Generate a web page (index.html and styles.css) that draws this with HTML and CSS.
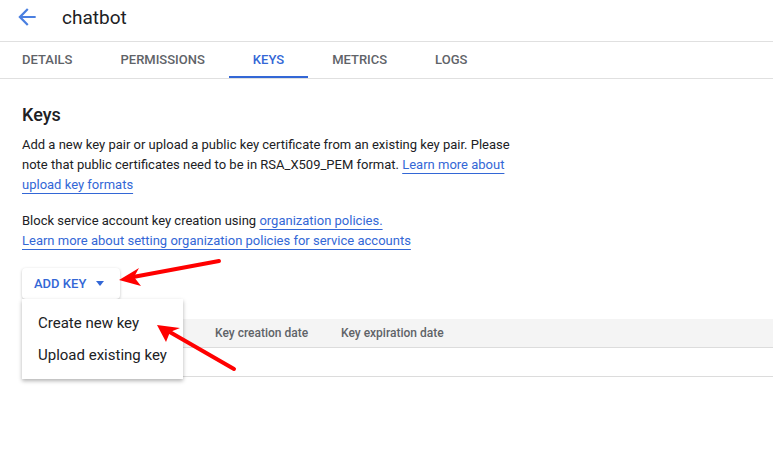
FILE: index.html
```html
<!DOCTYPE html>
<html>
<head>
<meta charset="utf-8">
<link rel="stylesheet" href="styles.css">
</head>
<body>
<div class="page">
  <header class="topbar">
    <span class="back">
      <svg width="26" height="26" viewBox="0 0 24 24"><path d="M20 11H7.83l5.59-5.59L12 4l-8 8 8 8 1.41-1.41L7.83 13H20v-2z" fill="#4a7fe0"/></svg>
    </span>
    <span class="title">chatbot</span>
  </header>
  <nav class="tabs">
    <span class="tab first">DETAILS</span>
    <span class="tab">PERMISSIONS</span>
    <span class="tab active">KEYS</span>
    <span class="tab">METRICS</span>
    <span class="tab">LOGS</span>
  </nav>
  <main class="content">
    <h1 class="heading">Keys</h1>
    <p class="text">Add a new key pair or upload a public key certificate from an existing key pair. Please note that public certificates need to be in RSA_X509_PEM format. <a class="link">Learn more about</a> <a class="link">upload key formats</a></p>
    <p class="text block">Block service account key creation using <a class="link">organization policies.</a><br><a class="link">Learn more about setting organization policies for service accounts</a></p>
    <div class="actions">
      <button class="addkey">ADD KEY <span class="caret"></span></button>
      <div class="menu">
        <div class="item">Create new key</div>
        <div class="item">Upload existing key</div>
      </div>
    </div>
    <div class="table">
      <div class="thead">
        <span class="col c1"></span>
        <span class="col c2">Key creation date</span>
        <span class="col c3">Key expiration date</span>
      </div>
      <div class="trow"></div>
    </div>
  </main>
  <svg class="arrows" width="773" height="466" viewBox="0 0 773 466">
    <g stroke="#f00" stroke-width="4" stroke-linecap="round" fill="none">
      <line x1="219" y1="261" x2="133" y2="277"/>
      <line x1="234" y1="369" x2="168" y2="331"/>
    </g>
    <g fill="#f00">
      <polygon points="119,280 139,268 134,277 141,286"/>
      <polygon points="157,325 180,328 170,332 166,342"/>
    </g>
  </svg>
</div>
</body>
</html>
```
FILE: styles.css
```css
* { box-sizing: border-box; }
html, body { margin: 0; padding: 0; background: #fff; }
body { font-family: Roboto, "Liberation Sans", Arial, sans-serif; color: #202124; }
.page { position: relative; width: 773px; height: 466px; overflow: hidden; }
.topbar { height: 42px; display: flex; align-items: center; border-bottom: 1px solid #e0e0e0; padding-left: 14px; padding-bottom: 7px; }
.back { display: flex; width: 26px; height: 26px; }
.title { margin-left: 22px; font-size: 19px; color: #202124; }
.tabs { height: 37px; display: flex; border-bottom: 1px solid #e0e0e0; }
.tab { display: flex; align-items: center; padding: 0 24px 1px; font-size: 13px; font-weight: 500; color: #5f6368; height: 36px; }
.tab.first { padding-left: 22px; }
.tab.active { color: #3367d6; border-bottom: 2px solid #3367d6; padding-top: 1px; padding-bottom: 0; }
.content { padding: 0 0 0 22px; }
.heading { margin: 24px 0 0; font-size: 18px; font-weight: 500; line-height: 24px; }
.text { margin: 8px 0 0; width: 500px; font-size: 13px; line-height: 20px; color: #202124; }
.text.block { margin-top: 16px; width: 520px; }
.link { color: #3367d6; text-decoration: underline; text-decoration-color: #3367d6; text-underline-offset: 4px; text-decoration-thickness: 1px; }
.actions { position: relative; margin-top: 17px; height: 31px; }
.addkey { height: 31px; width: 98px; border: none; background: #fff; border-radius: 4px; box-shadow: 0 1px 3px rgba(0,0,0,0.25); font-family: inherit; font-size: 13px; font-weight: 500; color: #3367d6; padding: 0 0 0 12px; text-align: left; display: flex; align-items: center; }
.caret { display: inline-block; width: 0; height: 0; border-left: 4px solid transparent; border-right: 4px solid transparent; border-top: 5px solid #3367d6; margin-left: 10px; }
.menu { position: absolute; left: 0; top: 31px; width: 161px; height: 80px; background: #fff; box-shadow: 0 2px 4px rgba(0,0,0,0.3); padding-top: 8px; z-index: 2; }
.item { padding-left: 16px; font-size: 15px; line-height: 32px; height: 32px; color: #202124; }
.table { margin-top: 20px; }
.thead { height: 29px; background: #f4f4f4; border-bottom: 1px solid #dcdcdc; display: flex; align-items: center; font-size: 12px; font-weight: 500; color: #5f6368; }
.col { display: block; }
.c1 { width: 193px; }
.c2 { width: 126px; }
.trow { height: 29px; border-bottom: 1px solid #dcdcdc; }
.arrows { position: absolute; left: 0; top: 0; pointer-events: none; z-index: 3; }
```
